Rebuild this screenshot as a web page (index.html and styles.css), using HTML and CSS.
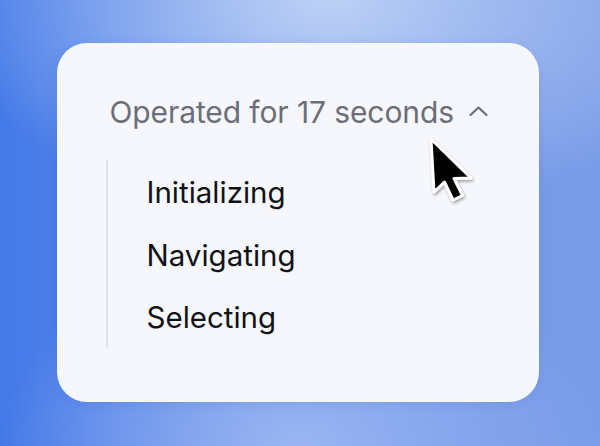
FILE: index.html
```html
<!DOCTYPE html>
<html>
<head>
<meta charset="utf-8">
<link rel="stylesheet" href="styles.css">
</head>
<body>
<div class="stage">
  <div class="card">
    <div class="header">
      <span class="title">Operated for 17 seconds</span>
      <svg class="chevron" width="21" height="12" viewBox="0 0 21 12"><path d="M2.5 10 L10.5 2.5 L18.5 10" fill="none" stroke="#6b6e78" stroke-width="2.2" stroke-linecap="round" stroke-linejoin="round"/></svg>
    </div>
    <div class="steps">
      <div class="step">Initializing</div>
      <div class="step">Navigating</div>
      <div class="step">Selecting</div>
    </div>
  </div>
  <svg class="cursor" width="52" height="76" viewBox="0 0 52 76">
    <defs>
      <filter id="sh" x="-30%" y="-30%" width="160%" height="160%">
        <feDropShadow dx="1" dy="2" stdDeviation="1.5" flood-color="#000" flood-opacity="0.35"/>
      </filter>
    </defs>
    <path d="M3 3 L6 56 L16.5 46 L25 64 L34.5 59.5 L26 42.5 L43 42 Z" fill="#000" stroke="#fff" stroke-width="3" stroke-linejoin="round" filter="url(#sh)"/>
  </svg>
</div>
</body>
</html>
```

FILE: styles.css
```css
html, body {
  margin: 0;
  padding: 0;
}
body {
  width: 600px;
  height: 446px;
  overflow: hidden;
  font-family: Inter, "Noto Sans", sans-serif;
}
.stage {
  position: relative;
  width: 600px;
  height: 446px;
  display: flex;
  align-items: center;
  justify-content: center;
  background:
    radial-gradient(ellipse 65% 50% at 55% 0%, #bdd1f6 0%, rgba(189,209,246,0) 100%),
    radial-gradient(ellipse 50% 45% at 50% 100%, #9ab5f2 0%, rgba(154,181,242,0) 100%),
    linear-gradient(90deg, #4379e8 0%, #6a91ea 45%, #7b9de8 100%);
}
.card {
  box-sizing: border-box;
  width: 482px;
  height: 359px;
  margin-left: -5px;
  margin-top: -1px;
  background: #f5f7fc;
  border-radius: 30px;
  padding: 51px 0 0 53px;
  box-shadow: 0 2px 10px rgba(40,70,160,0.12);
}
.header {
  display: flex;
  align-items: center;
  gap: 14px;
  height: 36px;
}
.title {
  font-size: 30px;
  line-height: 36px;
  color: #6b6e78;
  letter-spacing: -0.1px;
}
.chevron {
  margin-top: -2px;
}
.steps {
  margin-top: 30px;
  margin-left: -4px;
  border-left: 2px solid #e1e3e9;
  padding: 14px 0 13px 39px;
  display: flex;
  flex-direction: column;
  gap: 26.5px;
}
.step {
  font-size: 29.5px;
  line-height: 36px;
  color: #111216;
}
.cursor {
  position: absolute;
  left: 428px;
  top: 136px;
}
```
